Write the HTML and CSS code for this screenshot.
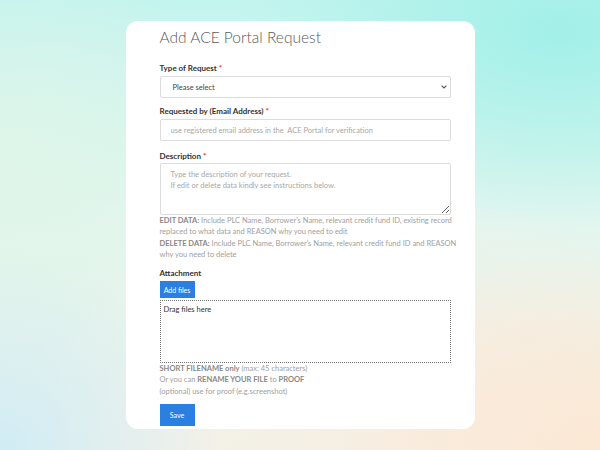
FILE: index.html
```html
<!DOCTYPE html>
<html>
<head>
<meta charset="utf-8">
<link rel="stylesheet" href="styles.css">
</head>
<body>
<div class="page">
  <form class="card">
    <h1 class="title">Add ACE Portal Request</h1>

    <label class="label label-first">Type of Request <span class="req">*</span></label>
    <div class="select">
      <span>Please select</span>
      <svg class="chev" width="6" height="4" viewBox="0 0 6 4"><path d="M0.6 0.6 L3 3 L5.4 0.6" fill="none" stroke="#555" stroke-width="1.1"/></svg>
    </div>

    <label class="label">Requested by (Email Address) <span class="req">*</span></label>
    <input class="input" type="text" placeholder="use registered email address in the  ACE Portal for verification">

    <label class="label label-desc">Description <span class="req">*</span></label>
    <textarea class="textarea" placeholder="Type the description of your request.&#10;If edit or delete data kindly see instructions below."></textarea>
    <p class="help help-desc"><b>EDIT DATA:</b> Include PLC Name, Borrower's Name, relevant credit fund ID, existing record<br>replaced to what data and REASON why you need to edit<br><b>DELETE DATA:</b> Include PLC Name, Borrower's Name, relevant credit fund ID and REASON<br>why you need to delete</p>

    <label class="label label-attach">Attachment</label>
    <button type="button" class="btn btn-add">Add files</button>
    <div class="drop">Drag files here</div>
    <p class="help help-file"><b>SHORT FILENAME only</b> (max: 45 characters)<br>Or you can <b>RENAME YOUR FILE</b> to <b>PROOF</b><br>(optional) use for proof (e.g.screenshot)</p>

    <button type="button" class="btn btn-save">Save</button>
  </form>
</div>
</body>
</html>
```
FILE: styles.css
```css
* { box-sizing: border-box; }
html, body { margin: 0; padding: 0; }
body {
  width: 600px;
  height: 450px;
  overflow: hidden;
  font-family: Lato, "Open Sans", sans-serif;
  background:
    radial-gradient(ellipse 260px 200px at 600px 450px, rgba(252,232,212,0.95), rgba(252,232,212,0) 100%),
    radial-gradient(ellipse 300px 220px at 480px 430px, rgba(250,236,222,0.9), rgba(250,236,222,0) 100%),
    radial-gradient(ellipse 220px 200px at 0px 450px, rgba(206,236,246,0.95), rgba(206,236,246,0) 100%),
    radial-gradient(ellipse 260px 220px at 0px 180px, rgba(224,245,232,0.9), rgba(224,245,232,0) 100%),
    radial-gradient(ellipse 320px 200px at 560px 30px, rgba(160,240,232,0.95), rgba(160,240,232,0) 100%),
    linear-gradient(180deg, #c4f4ee 0%, #e3f6ef 50%, #f3f1e8 100%);
}
.page {
  display: flex;
  justify-content: center;
  padding-top: 21px;
}
.card {
  width: 349px;
  height: 408px;
  background: #fff;
  border-radius: 12px;
  padding: 0 24px 0 34px;
  display: flex;
  flex-direction: column;
  align-items: flex-start;
}
.card > * { flex-shrink: 0; }
.title {
  margin: 6px 0 0 0;
  font-size: 15.5px;
  line-height: 20px;
  font-weight: 300;
  color: #5a5a5a;
}
.label {
  display: block;
  font-size: 8px;
  line-height: 12px;
  font-weight: 700;
  color: #333;
  margin-top: 7px;
  margin-bottom: 2px;
}
.label-first { margin-top: 15px; }
.label-desc { margin-top: 9px; margin-bottom: 1px; }
.req { color: #e0302f; }
.select {
  width: 291px;
  height: 22px;
  border: 1px solid #dcdcdc;
  border-radius: 2px;
  display: flex;
  align-items: center;
  justify-content: space-between;
  padding: 0 3px 0 12px;
  font-size: 7.5px;
  color: #444;
}
.input {
  width: 291px;
  height: 22px;
  margin: 0;
  border: 1px solid #dcdcdc;
  border-radius: 2px;
  padding: 0 10px;
  font-family: Lato, sans-serif;
  font-size: 7.5px;
  color: #444;
  outline: none;
}
.input::placeholder, .textarea::placeholder { color: #a8a8a8; }
.textarea {
  width: 291px;
  height: 52px;
  border: 1px solid #dcdcdc;
  border-radius: 2px;
  padding: 5px 10px;
  font-family: Lato, sans-serif;
  font-size: 7.5px;
  line-height: 11px;
  resize: vertical;
  outline: none;
  margin: 0;
  display: block;
}
.help {
  margin: 0;
  font-size: 7.5px;
  line-height: 11.3px;
  color: #a0a0a0;
  white-space: nowrap;
}
.help b { color: #888; font-weight: 700; }
.help-desc { margin-top: 0; }
.label-attach { margin-top: 7px; }
.btn {
  border: 0;
  margin: 0;
  background: #2a7fe0;
  color: #fff;
  font-family: Lato, sans-serif;
  font-size: 7px;
  width: 35px;
  padding: 0;
  border-radius: 0;
}
.btn-add { height: 17px; }
.drop {
  margin-top: 2px;
  width: 291px;
  height: 63px;
  border: 1px dotted #777;
  padding: 4px 3px;
  font-size: 7.5px;
  color: #333;
}
.help-file { margin-top: 0; }
.btn-save { height: 22px; margin-top: 7px; }
```
